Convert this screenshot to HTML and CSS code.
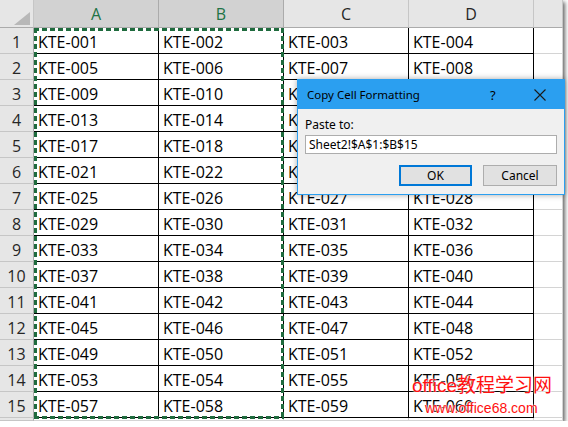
FILE: index.html
```html
<!DOCTYPE html>
<html lang="en">
<head>
  <meta charset="UTF-8">
  <title>Copy Cell Formatting</title>
  <link rel="stylesheet" href="styles.css">
</head>
<body>

  <div class="sheet-wrap">
    <div class="sheet" id="sheet"></div>
    <div class="marquee"></div>
  </div>

  <div class="dialog">
    <div class="dialog-title">
      <span class="dialog-name">Copy Cell Formatting</span>
      <span class="dialog-help">?</span>
      <svg class="dialog-close" width="12" height="12" viewBox="0 0 12 12">
        <path d="M0.5 0.5 L11.5 11.5 M11.5 0.5 L0.5 11.5" stroke="#1a1a1a" stroke-width="1.1" fill="none"/>
      </svg>
    </div>
    <div class="dialog-body">
      <label class="dialog-label">Paste to:</label>
      <div class="dialog-input">Sheet2!$A$1:$B$15</div>
      <div class="dialog-buttons">
        <button class="btn btn-default">OK</button>
        <button class="btn">Cancel</button>
      </div>
    </div>
  </div>

  <div class="watermark">
    <div class="wm-big">office教程学习网</div>
    <div class="wm-small">www.office68.com</div>
  </div>

  <script>
    const kolom = ["A", "B", "C", "D", ""];
    const sheet = document.getElementById("sheet");
    let html = '<div class="corner"></div>';

    // header kolom
    kolom.forEach((k, i) => {
      const sel = i < 2 ? " head-sel" : "";
      html += `<div class="col-head${sel}">${k}</div>`;
    });

    // baris data
    for (let r = 1; r <= 15; r++) {
      html += `<div class="row-head">${r}</div>`;
      for (let c = 0; c < 4; c++) {
        const n = String((r - 1) * 4 + c + 1).padStart(3, "0");
        html += `<div class="cell">KTE-${n}</div>`;
      }
      html += '<div class="cell cell-empty"></div>';
    }

    // baris 16 (terpotong)
    html += '<div class="row-head"></div>';
    for (let c = 0; c < 5; c++) {
      html += '<div class="cell cell-empty"></div>';
    }

    sheet.innerHTML = html;
  </script>

</body>
</html>
```

FILE: styles.css
```css
body {
  margin: 0;
  background: #ffffff;
  font-family: "Open Sans", sans-serif;
}
.sheet-wrap {
  position: relative;
  width: 563px;
  height: 421px;
  box-shadow: 2px 2px 4px rgba(0, 0, 0, 0.6);
}
.sheet {
  width: 563px;
  height: 421px;
  overflow: hidden;
  display: grid;
  grid-template-columns: 34px repeat(4, 125px) 1fr;
  grid-template-rows: 28px repeat(15, 26px) 1fr;
  background: #ffffff;
}
.sheet > div {
  box-sizing: border-box;
}
.corner {
  position: relative;
  background: #e6e6e6;
  border-right: 1px solid #c6c6c6;
  border-bottom: 1px solid #ababab;
}
.corner::after {
  content: "";
  position: absolute;
  left: 14px;
  top: 12px;
  width: 16px;
  height: 13px;
  background: #b8b8b8;
  clip-path: polygon(100% 0, 100% 100%, 0 100%);
}
.col-head {
  background: #e6e6e6;
  border-right: 1px solid #c6c6c6;
  border-bottom: 1px solid #ababab;
  text-align: center;
  font-size: 16px;
  line-height: 26px;
  padding-top: 1px;
  color: #262626;
}
.head-sel {
  background: #d2d2d2;
  color: #217346;
  border-right-color: #ababab;
}
.row-head {
  background: #e6e6e6;
  border-right: 1px solid #ababab;
  border-bottom: 1px solid #c6c6c6;
  text-align: center;
  font-size: 16px;
  line-height: 24px;
  padding-top: 2px;
  color: #262626;
}
.cell {
  border-right: 1px solid #000000;
  border-bottom: 1px solid #000000;
  font-size: 16px;
  line-height: 24px;
  padding: 2px 0 0 4px;
  color: #000000;
  white-space: nowrap;
  overflow: hidden;
}
.cell-empty {
  border-right-color: #d4d4d4;
  border-bottom-color: #d4d4d4;
}
.marquee {
  position: absolute;
  left: 34px;
  top: 28px;
  width: 250px;
  height: 391px;
  background:
    repeating-linear-gradient(90deg, #1f6b3e 0 5px, transparent 5px 8px) top left / 100% 3px no-repeat,
    repeating-linear-gradient(90deg, #1f6b3e 0 5px, transparent 5px 8px) bottom left / 100% 3px no-repeat,
    repeating-linear-gradient(180deg, #1f6b3e 0 5px, transparent 5px 8px) top left / 3px 100% no-repeat,
    repeating-linear-gradient(180deg, #1f6b3e 0 5px, transparent 5px 8px) top right / 3px 100% no-repeat;
  pointer-events: none;
}

.dialog {
  position: absolute;
  left: 297px;
  top: 79px;
  width: 266px;
  border: 1px solid #2b9ff0;
  background: #f0f0f0;
  box-shadow: 0 0 6px rgba(0, 0, 0, 0.35);
  font-family: "Noto Sans", sans-serif;
  font-size: 12px;
  color: #000000;
}
.dialog-title {
  height: 29px;
  background: #2b9ff0;
  display: flex;
  align-items: center;
  padding: 0 0 0 9px;
}
.dialog-name {
  flex: 1;
  font-size: 11.5px;
}
.dialog-help {
  width: 44px;
  font-size: 13px;
}
.dialog-close {
  margin-right: 18px;
}
.dialog-body {
  padding: 8px 7px 8px 7px;
}
.dialog-label {
  display: block;
  line-height: 16px;
  margin-bottom: 2px;
}
.dialog-input {
  height: 19px;
  box-sizing: border-box;
  background: #ffffff;
  border: 1px solid #adadad;
  padding-left: 3px;
  line-height: 17px;
}
.dialog-buttons {
  display: flex;
  justify-content: flex-end;
  gap: 11px;
  margin-top: 11px;
}
.btn {
  width: 74px;
  height: 21px;
  box-sizing: border-box;
  background: #e1e1e1;
  border: 1px solid #adadad;
  font-family: "Noto Sans", sans-serif;
  font-size: 12px;
  padding: 0;
}
.btn-default {
  border: 2px solid #0078d7;
  width: 73px;
}

.watermark {
  position: absolute;
  left: 412px;
  top: 373px;
  color: #ff1010;
  white-space: nowrap;
  text-shadow: 0 0 2px #ffffff, 0 0 2px #ffffff;
  font-family: "Liberation Sans", "Noto Sans CJK SC", sans-serif;
}
.wm-big {
  font-size: 19px;
  line-height: 26px;
}
.wm-small {
  font-size: 14px;
  line-height: 18px;
  padding-left: 13px;
}
```
